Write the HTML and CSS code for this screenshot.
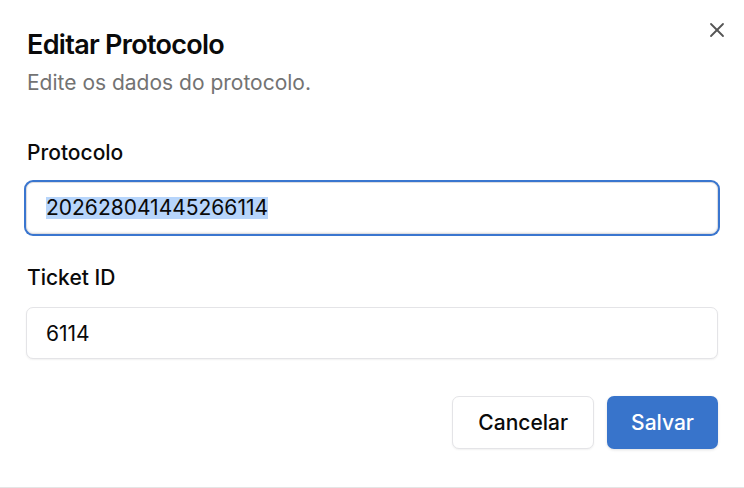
FILE: index.html
```html
<!DOCTYPE html>
<html lang="pt-BR">
<head>
    <meta charset="UTF-8">
    <title>Editar Protocolo</title>
    <link rel="stylesheet" href="styles.css">
</head>
<body>
    <div class="dialog">
        <button class="close" aria-label="Fechar">
            <svg width="24" height="24" viewBox="0 0 24 24" fill="none" stroke="currentColor" stroke-width="1.8" stroke-linecap="round">
                <path d="M18 6 6 18"/>
                <path d="M6 6l12 12"/>
            </svg>
        </button>

        <div class="header">
            <h2 class="title">Editar Protocolo</h2>
            <p class="description">Edite os dados do protocolo.</p>
        </div>

        <div class="field">
            <label class="label" for="protocolo">Protocolo</label>
            <div class="input focused" id="protocolo"><span class="selected">202628041445266114</span></div>
        </div>

        <div class="field">
            <label class="label" for="ticket">Ticket ID</label>
            <input class="input" id="ticket" type="text" value="6114">
        </div>

        <div class="footer">
            <button class="btn outline">Cancelar</button>
            <button class="btn primary">Salvar</button>
        </div>
    </div>
</body>
</html>
```

FILE: styles.css
```css
* {
    box-sizing: border-box;
}

body {
    margin: 0;
    font-family: Inter, "Noto Sans", sans-serif;
    color: #0a0a0a;
    background-color: #ffffff;
}

.dialog {
    position: relative;
    height: 488px;
    padding: 29px 26px 0 26px;
    border-bottom: 1px solid #e5e5e5;
}

.close {
    position: absolute;
    top: 18px;
    right: 15px;
    width: 24px;
    height: 24px;
    padding: 0;
    border: none;
    background: none;
    color: #555555;
    cursor: pointer;
}

.close svg {
    display: block;
}

.header {
    padding-left: 1px;
    margin-bottom: 42px;
}

.title {
    margin: 0 0 8px 0;
    font-size: 27px;
    line-height: 32px;
    font-weight: 600;
    letter-spacing: -0.7px;
}

.description {
    margin: 0;
    font-size: 21px;
    line-height: 28px;
    color: #737373;
}

.field {
    display: flex;
    flex-direction: column;
    gap: 15px;
    margin-bottom: 30px;
}

.label {
    padding-left: 1px;
    font-size: 21px;
    line-height: 28px;
    font-weight: 500;
}

.input {
    display: flex;
    align-items: center;
    width: 100%;
    height: 52px;
    padding: 0 19px;
    font-family: inherit;
    font-size: 21px;
    color: #0a0a0a;
    background-color: #ffffff;
    border: 1px solid #e4e4e7;
    border-radius: 7px;
    box-shadow: 0 1px 2px rgba(0, 0, 0, 0.06);
    outline: none;
}

.input.focused {
    border-color: #dcdce0;
    box-shadow: 0 0 0 2px #3a76cf, inset 0 -1px 2px rgba(0, 0, 0, 0.06);
}

.selected {
    background-color: #b7d5fb;
    line-height: 22px;
}

.footer {
    display: flex;
    justify-content: flex-end;
    gap: 13px;
    margin-top: 37px;
}

.btn {
    height: 53px;
    padding: 0 25px;
    font-family: inherit;
    font-size: 21px;
    font-weight: 500;
    border-radius: 7px;
    cursor: pointer;
}

.outline {
    color: #0a0a0a;
    background-color: #ffffff;
    border: 1px solid #e4e4e7;
    box-shadow: 0 1px 2px rgba(0, 0, 0, 0.06);
}

.primary {
    padding: 0 24px;
    color: #ffffff;
    background-color: #3874cb;
    border: none;
    box-shadow: 0 1px 3px rgba(0, 0, 0, 0.12);
}
```
